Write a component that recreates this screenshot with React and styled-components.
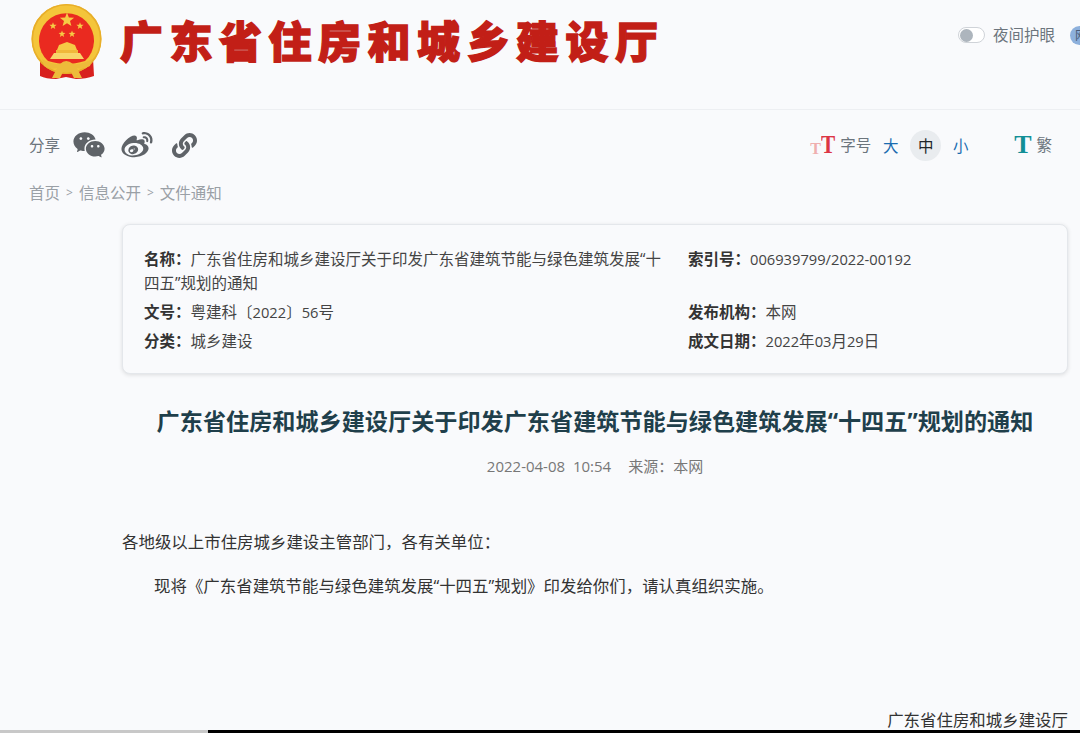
import React from "react";
import styled, { createGlobalStyle } from "styled-components";
import { RiWechatFill, RiWeiboFill } from "react-icons/ri";
import { FaLink } from "react-icons/fa";

const FONT = `"Open Sans", "Noto Sans CJK SC", sans-serif`;

const GlobalStyle = createGlobalStyle`
    html, body {
        margin: 0;
        padding: 0;
        height: 100%;
        overflow: hidden;
        background-color: #F9FAFC;
    }

    body {
        font-family: ${FONT};
        color: #333333;
    }
`;

function Emblem() {
    const stars = [
        [37, 16, 7.5],
        [23, 22, 3.8],
        [50, 22, 3.8],
        [32, 30, 3.6],
        [42, 30, 3.6],
    ];
    const star = (cx, cy, r) => {
        const pts = [];
        for (let i = 0; i < 10; i++) {
            const a = -Math.PI / 2 + (i * Math.PI) / 5;
            const d = i % 2 === 0 ? r : r * 0.42;
            pts.push(`${(cx + d * Math.cos(a)).toFixed(2)},${(cy + d * Math.sin(a)).toFixed(2)}`);
        }
        return pts.join(" ");
    };

    return (
        <svg width="73" height="76" viewBox="0 0 73 76">
            <path d="M10 54 L10 72 Q16 75 26 75 L36 73 L46 75 Q56 75 64 72 L63 54 Z" fill="#D8201E" />
            <circle cx="36.5" cy="35" r="35" fill="#F4C53A" />
            <circle cx="36.5" cy="35" r="34.2" fill="none" stroke="#E8AE2A" strokeWidth="1.6" />
            <path d="M18 57 A27.5 27.5 0 1 1 55 57 Q45 60 36.5 60 Q28 60 18 57 Z" fill="#EA2A20" />
            {stars.map(([x, y, r], i) => (
                <polygon key={i} points={star(x, y, r)} fill="#F6CB45" />
            ))}
            <path d="M29 41 L37 38 L45 41 L47 46 H27 Z" fill="#F6CB45" />
            <rect x="26" y="46" width="22" height="3" fill="#F0B83A" />
            <path d="M20 55 L24 49 H50 L54 55 Z" fill="#F8D66A" />
            <path d="M12 55 Q22 61 30 60 Q36 54 43 60 Q52 61 62 55 L60 62 Q53 66 47 64 Q50 70 52 74 H44 L41 68 H33 L30 74 H22 Q24 70 27 64 Q20 66 14 62 Z" fill="#EDBB3A" />
        </svg>
    );
}

export default function App() {
    return (
        <Page>
            <GlobalStyle />
            <Header>
                <Brand>
                    <Emblem />
                    <SiteName>广东省住房和城乡建设厅</SiteName>
                </Brand>
                <NightMode>
                    <Toggle />
                    <NightLabel>夜间护眼</NightLabel>
                    <AccessBadge>网</AccessBadge>
                </NightMode>
            </Header>

            <Tools>
                <Share>
                    <ShareLabel>分享</ShareLabel>
                    <RiWechatFill size={34} />
                    <RiWeiboFill size={34} />
                    <FaLink size={25} />
                </Share>
                <FontTools>
                    <FontIcon>
                        <SmallT>T</SmallT>
                        <BigT>T</BigT>
                    </FontIcon>
                    <ToolLabel>字号</ToolLabel>
                    <SizeGroup>
                        <SizeButton>大</SizeButton>
                        <SizeButton $active>中</SizeButton>
                        <SizeButton>小</SizeButton>
                    </SizeGroup>
                    <TradIcon>T</TradIcon>
                    <ToolLabel>繁</ToolLabel>
                </FontTools>
            </Tools>

            <Breadcrumb>
                <span>首页</span>
                <Arrow>&gt;</Arrow>
                <span>信息公开</span>
                <Arrow>&gt;</Arrow>
                <span>文件通知</span>
            </Breadcrumb>

            <Content>
                <InfoCard>
                    <InfoItem>
                        <b>名称：</b>广东省住房和城乡建设厅关于印发广东省建筑节能与绿色建筑发展“十四五”规划的通知
                    </InfoItem>
                    <InfoItem>
                        <b>索引号：</b><Num>006939799/2022-00192</Num>
                    </InfoItem>
                    <InfoItem>
                        <b>文号：</b>粤建科〔<Num>2022</Num>〕<Num>56</Num>号
                    </InfoItem>
                    <InfoItem>
                        <b>发布机构：</b>本网
                    </InfoItem>
                    <InfoItem>
                        <b>分类：</b>城乡建设
                    </InfoItem>
                    <InfoItem>
                        <b>成文日期：</b><Num>2022</Num>年<Num>03</Num>月<Num>29</Num>日
                    </InfoItem>
                </InfoCard>

                <ArticleTitle>广东省住房和城乡建设厅关于印发广东省建筑节能与绿色建筑发展“十四五”规划的通知</ArticleTitle>
                <Meta>
                    <span>2022-04-08&nbsp;&nbsp;10:54</span>
                    <span>来源：本网</span>
                </Meta>

                <Paragraph>各地级以上市住房城乡建设主管部门，各有关单位：</Paragraph>
                <IndentParagraph>现将《广东省建筑节能与绿色建筑发展“十四五”规划》印发给你们，请认真组织实施。</IndentParagraph>
                <Signature>广东省住房和城乡建设厅</Signature>
            </Content>

            <ScrollBar>
                <ScrollTrack />
                <ScrollThumb />
            </ScrollBar>
        </Page>
    );
}

const Page = styled.div`
    display: flex;
    flex-direction: column;

    width: 1080px;
    height: 733px;

    overflow: hidden;
`;

const Header = styled.header`
    display: flex;
    justify-content: space-between;
    flex-shrink: 0;

    box-sizing: border-box;
    height: 110px;

    padding: 4px 0 0 30px;

    border-bottom: 1px solid #EDEFF2;
`;

const Brand = styled.div`
    display: flex;
    align-items: flex-start;
    gap: 17px;
`;

const SiteName = styled.h1`
    margin: 6px 0 0 0;

    font-size: 43px;
    font-weight: 900;
    line-height: 64px;
    letter-spacing: 6.5px;
    white-space: nowrap;

    color: #C21F17;
    -webkit-text-stroke: 1.4px #C21F17;
`;

const NightMode = styled.div`
    display: flex;
    align-items: center;
    align-self: flex-start;

    margin-top: 21px;
    margin-right: -20px;
`;

const Toggle = styled.div`
    position: relative;

    box-sizing: border-box;
    width: 27px;
    height: 16px;

    border: 1px solid #CFD3D8;
    border-radius: 8px;

    background-color: #FFFFFF;

    &::before {
        content: "";
        position: absolute;
        left: 1px;
        top: 0.5px;

        width: 13px;
        height: 13px;

        border-radius: 50%;

        background-color: #ADB5BD;
    }
`;

const NightLabel = styled.span`
    margin-left: 8px;

    font-size: 15.5px;
    line-height: 20px;
    color: #6C757D;
`;

const AccessBadge = styled.span`
    display: flex;
    align-items: center;
    flex-shrink: 0;

    box-sizing: border-box;
    width: 30px;
    height: 19px;

    margin-left: 15px;
    padding-left: 5px;

    border-radius: 10px;

    background-color: #8DB0DC;
    color: #4A5C78;

    font-size: 12px;
`;

const Tools = styled.div`
    display: flex;
    justify-content: space-between;
    align-items: center;
    flex-shrink: 0;

    height: 70px;

    padding: 0 28px 0 29px;
`;

const Share = styled.div`
    display: flex;
    align-items: center;
    gap: 16px;

    color: #5F6368;

    svg:first-of-type {
        margin: 0 -3px 0 -7px;
    }

    svg:nth-of-type(2) {
        margin-left: 1px;
    }

    svg:nth-of-type(3) {
        margin-left: 2px;
    }
`;

const ShareLabel = styled.span`
    margin-right: 3px;

    font-size: 15.5px;
    line-height: 20px;
    color: #6C757D;
`;

const FontTools = styled.div`
    display: flex;
    align-items: center;
`;

const FontIcon = styled.span`
    display: flex;
    align-items: flex-end;

    width: 25px;
    height: 22px;

    font-family: "Liberation Serif", serif;
    font-weight: bold;
`;

const SmallT = styled.span`
    width: 11px;

    font-size: 16px;
    line-height: 15px;
    color: #EFAFAF;
`;

const BigT = styled.span`
    font-size: 25px;
    line-height: 22px;
    color: #DC3545;

    transform: scaleX(0.85);
    transform-origin: left center;
`;

const ToolLabel = styled.span`
    margin-left: 5px;

    font-size: 15.5px;
    line-height: 20px;
    color: #6C757D;
`;

const SizeGroup = styled.div`
    display: flex;
    gap: 4px;

    margin-left: 4px;
`;

const SizeButton = styled.span`
    display: flex;
    justify-content: center;
    align-items: center;

    width: 31px;
    height: 31px;

    border-radius: 50%;

    background-color: ${props => props.$active ? "#E9ECEF" : "transparent"};
    color: ${props => props.$active ? "#212529" : "#1A6CB0"};

    font-size: 15.5px;
`;

const TradIcon = styled.span`
    margin-left: 38px;

    font-family: "Liberation Serif", serif;
    font-size: 26px;
    font-weight: bold;
    line-height: 24px;

    color: #128F96;
`;

const Breadcrumb = styled.nav`
    display: flex;
    align-items: center;
    flex-shrink: 0;

    height: 25px;

    padding-left: 29px;

    font-size: 15.5px;
    color: #9AA0A6;
`;

const Arrow = styled.span`
    margin: 0 6px;

    font-size: 12px;
`;

const Content = styled.main`
    display: flex;
    flex-direction: column;
    flex: 1;

    padding: 19px 12px 0 122px;
`;

const InfoCard = styled.section`
    display: grid;
    grid-template-columns: 544px 1fr;
    row-gap: 5px;
    align-items: start;
    align-content: start;

    box-sizing: border-box;
    height: 150px;

    padding: 22px 21px 0;

    border: 1px solid #E4E7EB;
    border-radius: 8px;

    background-color: #F9FAFC;
    box-shadow: 0 1px 4px rgba(0, 0, 0, 0.12);
`;

const InfoItem = styled.div`
    padding-right: 22px;

    font-size: 15.5px;
    line-height: 24px;
    color: #444444;

    b {
        font-weight: bold;
        color: #333333;
    }
`;

const Num = styled.span`
    font-size: 14.7px;
`;

const ArticleTitle = styled.h2`
    margin: 29px 0 0 0;

    font-size: 23.15px;
    font-weight: bold;
    line-height: 36px;
    text-align: center;
    white-space: nowrap;

    color: #1F3F4B;
`;

const Meta = styled.div`
    display: flex;
    justify-content: center;
    gap: 17px;

    margin-top: 16px;

    font-size: 15px;
    line-height: 22px;
    color: #777777;
`;

const Paragraph = styled.p`
    margin: 53px 0 0 0;

    font-size: 16.45px;
    line-height: 24px;
    color: #333333;
`;

const IndentParagraph = styled(Paragraph)`
    margin-top: 20px;
    padding-left: 32px;
`;

const Signature = styled.div`
    margin-top: auto;

    font-size: 16.45px;
    line-height: 20px;
    text-align: right;
    color: #333333;
`;

const ScrollBar = styled.div`
    display: flex;
    flex-shrink: 0;

    height: 3px;
`;

const ScrollTrack = styled.div`
    width: 208px;

    background-color: #C8C8C8;
`;

const ScrollThumb = styled.div`
    flex: 1;

    background-color: #000000;
`;
